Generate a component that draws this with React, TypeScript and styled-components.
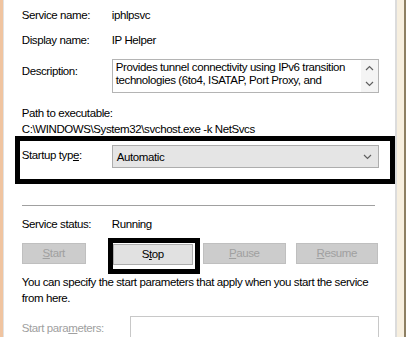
import React from "react";
import styled, { createGlobalStyle } from "styled-components";

const GlobalStyle = createGlobalStyle`
  html, body {
    margin: 0;
    padding: 0;
    background: #ffffff;
    overflow: hidden;
  }
`;

const Window = styled.div`
  display: flex;
  width: 406px;
  height: 337px;
  overflow: hidden;
  font-family: "Liberation Sans", Arial, sans-serif;
  font-size: 11.5px;
  letter-spacing: -0.4px;
  color: #000;
`;

const LeftEdge = styled.div`
  width: 3px;
  background: #f0c4a0;
  border-right: 1px solid #e2e2e2;
`;

const RightEdge = styled.div`
  width: 8px;
  background: #f7efdf;
  border-left: 2px solid #dcdcdc;
  border-right: 2px solid #8d7f62;
`;

const Panel = styled.div`
  flex: 1;
  background: #fff;
  padding: 7px 0 0 18px;
  display: flex;
  flex-direction: column;
  & > * {
    flex-shrink: 0;
  }
`;

const Row = styled.div<{ $mt?: number; $top?: boolean }>`
  display: flex;
  align-items: ${(p) => (p.$top ? "flex-start" : "center")};
  margin-top: ${(p) => p.$mt ?? 0}px;
  line-height: 16px;
`;

const Label = styled.div<{ $w?: number; $disabled?: boolean; $mt?: number }>`
  width: ${(p) => p.$w ?? 90}px;
  flex-shrink: 0;
  margin-top: ${(p) => p.$mt ?? 0}px;
  color: ${(p) => (p.$disabled ? "#a0a0a0" : "#000")};
`;

const Text = styled.div<{ $mt?: number }>`
  line-height: 16px;
  margin-top: ${(p) => p.$mt ?? 0}px;
`;

const DescBox = styled.div`
  width: 265px;
  height: 32px;
  border: 1px solid #b4b4b4;
  display: flex;
`;

const DescText = styled.div`
  flex: 1;
  padding: 1px 3px;
  line-height: 13px;
`;

const ScrollBar = styled.div`
  width: 17px;
  background: #f4f4f4;
  display: flex;
  flex-direction: column;
  align-items: center;
  justify-content: space-around;
  color: #606060;
`;

const HighlightBox = styled.div`
  margin: -1px 0 0 -7px;
  width: 368px;
  height: 38px;
  border: 5px solid #000;
  display: flex;
  align-items: flex-start;
  padding: 4px 0 0 2px;
  box-sizing: content-box;
  height: 34px;
`;

const Combo = styled.div`
  width: 267px;
  height: 23px;
  background: #e5e5e5;
  border: 1px solid #adadad;
  display: flex;
  align-items: center;
  justify-content: space-between;
  padding: 0 6px 0 4px;
  box-sizing: border-box;
  color: #606060;
`;

const ComboText = styled.span`
  color: #000;
`;

const Separator = styled.div`
  margin-top: 21px;
  width: 353px;
  height: 1px;
  background: #a0a0a0;
`;

const ButtonRow = styled.div`
  display: flex;
  align-items: center;
  margin-top: 3px;
  height: 36px;
`;

const Button = styled.div<{ $disabled?: boolean; $w: number; $ml: number }>`
  width: ${(p) => p.$w}px;
  height: 21px;
  margin-left: ${(p) => p.$ml}px;
  box-sizing: border-box;
  display: flex;
  align-items: center;
  justify-content: center;
  background: ${(p) => (p.$disabled ? "#cccccc" : "#e1e1e1")};
  border: 1px solid ${(p) => (p.$disabled ? "#bfbfbf" : "#adadad")};
  color: ${(p) => (p.$disabled ? "#a0a0a0" : "#000")};
`;

const StopFrame = styled.div`
  margin: 5px 0 0 22px;
  width: 92px;
  height: 36px;
  box-sizing: border-box;
  border: 5px solid #000;
  display: flex;
  align-items: flex-start;
  padding-top: 1px;
`;

const Para = styled.div`
  margin-top: 3px;
  line-height: 16px;
`;

const Input = styled.div`
  width: 249px;
  height: 24px;
  border: 1px solid #c8c8c8;
  box-sizing: border-box;
`;

const Chevron = ({ up }: { up?: boolean }) => (
  <svg width="9" height="6" viewBox="0 0 9 6">
    <path
      d={up ? "M1 5 L4.5 1.5 L8 5" : "M1 1 L4.5 4.5 L8 1"}
      fill="none"
      stroke="currentColor"
      strokeWidth="1.2"
    />
  </svg>
);

export default function App() {
  return (
    <>
      <GlobalStyle />
      <Window>
        <LeftEdge />
        <Panel>
          <Row>
            <Label>Service name:</Label>
            <Text>iphlpsvc</Text>
          </Row>
          <Row $mt={9}>
            <Label>Display name:</Label>
            <Text>IP Helper</Text>
          </Row>
          <Row $mt={11} $top>
            <Label $mt={4}>Description:</Label>
            <DescBox>
              <DescText>
                Provides tunnel connectivity using IPv6 transition
                <br />
                technologies (6to4, ISATAP, Port Proxy, and
              </DescText>
              <ScrollBar>
                <Chevron up />
                <Chevron />
              </ScrollBar>
            </DescBox>
          </Row>
          <Text $mt={12}>Path to executable:</Text>
          <Text>C:\WINDOWS\System32\svchost.exe -k NetSvcs</Text>
          <HighlightBox>
            <Label $mt={4}>
              Startup typ<u>e</u>:
            </Label>
            <Combo>
              <ComboText>Automatic</ComboText>
              <Chevron />
            </Combo>
          </HighlightBox>
          <Separator />
          <Row $mt={10}>
            <Label>Service status:</Label>
            <Text>Running</Text>
          </Row>
          <ButtonRow>
            <Button $disabled $w={64} $ml={0}>
              <span>
                <u>S</u>tart
              </span>
            </Button>
            <StopFrame>
              <Button $w={80} $ml={0}>
                <span>
                  S<u>t</u>op
                </span>
              </Button>
            </StopFrame>
            <Button $disabled $w={83} $ml={3}>
              <span>
                <u>P</u>ause
              </span>
            </Button>
            <Button $disabled $w={82} $ml={10}>
              <span>
                <u>R</u>esume
              </span>
            </Button>
          </ButtonRow>
          <Para>
            You can specify the start parameters that apply when you start the service
            <br />
            from here.
          </Para>
          <Row $mt={10}>
            <Label $w={108} $disabled>
              Start para<u>m</u>eters:
            </Label>
            <Input />
          </Row>
        </Panel>
        <RightEdge />
      </Window>
    </>
  );
}
